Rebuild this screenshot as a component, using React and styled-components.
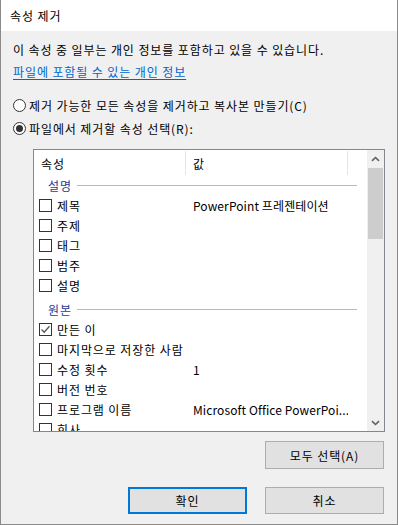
import React from "react";
import styled, { createGlobalStyle } from "styled-components";

const Global = createGlobalStyle`
  html, body { margin: 0; padding: 0; background: #f0f0f0; }
  * { box-sizing: border-box; }
`;

const Window = styled.div`
  width: 398px;
  height: 525px;
  display: flex;
  flex-direction: column;
  background: #f0f0f0;
  font-family: "Noto Sans CJK KR", "Noto Sans", sans-serif;
  font-size: 12px;
  letter-spacing: 0.9px;
  color: #000;
  border: 1px solid #8a8a8a;
  border-top: none;
  overflow: hidden;
`;

const TitleBar = styled.div`
  height: 31px;
  flex: none;
  background: #fff;
  display: flex;
  align-items: center;
  padding-left: 9px;
  font-size: 12px;
`;

const Body = styled.div`
  flex: 1;
  display: flex;
  flex-direction: column;
  padding: 0 12px 0 12px;
`;

const Line = styled.div`
  height: 16px;
  line-height: 16px;
  margin-top: ${(p) => p.$mt}px;
  white-space: nowrap;
`;

const Link = styled.a`
  color: #0066cc;
  text-decoration: underline;
  text-underline-offset: 2px;
  cursor: pointer;
`;

const RadioRow = styled.label`
  display: flex;
  align-items: center;
  height: 20px;
  margin-top: ${(p) => p.$mt}px;
  gap: 3px;
  white-space: nowrap;
`;

const RadioCircle = styled.span`
  width: 13px;
  height: 13px;
  border-radius: 50%;
  border: 1px solid #333;
  background: #fff;
  display: flex;
  align-items: center;
  justify-content: center;
  flex: none;
  &::after {
    content: "";
    display: ${(p) => (p.$on ? "block" : "none")};
    width: 7px;
    height: 7px;
    border-radius: 50%;
    background: #333;
  }
`;

const ListBox = styled.div`
  margin-top: 11px;
  margin-left: 20px;
  width: 352px;
  height: 283px;
  flex: none;
  border: 1px solid #828790;
  background: #fff;
  display: flex;
`;

const ListContent = styled.div`
  flex: 1;
  overflow: hidden;
  display: flex;
  flex-direction: column;
`;

const Header = styled.div`
  display: grid;
  grid-template-columns: 152px 162px 1fr;
  height: 25px;
  flex: none;
`;

const HeaderCell = styled.div`
  display: flex;
  align-items: center;
  padding-left: 7px;
  border-right: ${(p) => (p.$last ? "none" : "1px solid #e5e5e5")};
  margin: 1px 0 0 0;
`;

const GroupHeader = styled.div`
  display: flex;
  align-items: center;
  height: 20px;
  margin-top: ${(p) => (p.$first ? 0 : 4)}px;
  padding-left: 14px;
  padding-right: 10px;
  gap: 5px;
  color: #1e3c96;
  flex: none;
  &::after {
    content: "";
    flex: 1;
    height: 1px;
    background: #a6bce6;
  }
`;

const Row = styled.div`
  display: grid;
  grid-template-columns: 152px 162px;
  height: 20px;
  align-items: center;
  flex: none;
`;

const NameCell = styled.div`
  display: flex;
  align-items: center;
  gap: 5px;
  padding-left: 5px;
  white-space: nowrap;
`;

const ValueCell = styled.div`
  padding-left: 7px;
  white-space: nowrap;
  overflow: hidden;
  letter-spacing: 0.1px;
`;

const CheckBox = styled.span`
  width: 13px;
  height: 13px;
  border: 1px solid #333;
  background: #fff;
  flex: none;
  display: flex;
  align-items: center;
  justify-content: center;
`;

const ScrollBar = styled.div`
  width: 17px;
  flex: none;
  background: #f0f0f0;
  display: flex;
  flex-direction: column;
  align-items: center;
`;

const ArrowBtn = styled.div`
  height: 17px;
  width: 17px;
  flex: none;
  display: flex;
  align-items: center;
  justify-content: center;
`;

const Thumb = styled.div`
  width: 15px;
  height: 71px;
  margin-top: 1px;
  background: #cdcdcd;
  flex: none;
`;

const Spacer = styled.div`
  flex: 1;
`;

const ButtonRow = styled.div`
  display: flex;
  justify-content: flex-end;
  gap: 18px;
  margin-top: ${(p) => p.$mt}px;
  padding-right: 1px;
`;

const Button = styled.button`
  width: 119px;
  height: ${(p) => p.$h || 27}px;
  background: #e1e1e1;
  border: ${(p) => (p.$default ? "2px solid #0078d7" : "1px solid #adadad")};
  font-family: inherit;
  font-size: 12px;
  letter-spacing: 0.9px;
  color: #000;
  padding: 0;
  display: flex;
  align-items: center;
  justify-content: center;
`;

const Chevron = ({ down }) => (
  <svg width="9" height="6" viewBox="0 0 9 6">
    <path
      d={down ? "M1 1.2 L4.5 4.5 L8 1.2" : "M1 4.8 L4.5 1.5 L8 4.8"}
      fill="none"
      stroke="#606060"
      strokeWidth="1.6"
    />
  </svg>
);

const Check = () => (
  <svg width="11" height="11" viewBox="0 0 11 11">
    <path d="M1.5 5.5 L4.2 8.2 L9.5 2.2" fill="none" stroke="#555" strokeWidth="1.3" />
  </svg>
);

const groups = [
  {
    name: "설명",
    rows: [
      { n: "제목", v: "PowerPoint 프레젠테이션" },
      { n: "주제" },
      { n: "태그" },
      { n: "범주" },
      { n: "설명" },
    ],
  },
  {
    name: "원본",
    rows: [
      { n: "만든 이", c: true },
      { n: "마지막으로 저장한 사람" },
      { n: "수정 횟수", v: "1" },
      { n: "버전 번호" },
      { n: "프로그램 이름", v: "Microsoft Office PowerPoi..." },
      { n: "회사" },
    ],
  },
];

export default function App() {
  return (
    <>
      <Global />
      <Window>
        <TitleBar>속성 제거</TitleBar>
        <Body>
          <Line $mt={11}>이 속성 중 일부는 개인 정보를 포함하고 있을 수 있습니다.</Line>
          <Line $mt={6}>
            <Link>파일에 포함될 수 있는 개인 정보</Link>
          </Line>
          <RadioRow $mt={15}>
            <RadioCircle />
            제거 가능한 모든 속성을 제거하고 복사본 만들기(C)
          </RadioRow>
          <RadioRow $mt={3}>
            <RadioCircle $on />
            파일에서 제거할 속성 선택(R):
          </RadioRow>
          <ListBox>
            <ListContent>
              <Header>
                <HeaderCell>속성</HeaderCell>
                <HeaderCell>값</HeaderCell>
                <HeaderCell $last />
              </Header>
              {groups.map((g, gi) => (
                <React.Fragment key={g.name}>
                  <GroupHeader $first={gi === 0}>{g.name}</GroupHeader>
                  {g.rows.map((r) => (
                    <Row key={r.n}>
                      <NameCell>
                        <CheckBox>{r.c && <Check />}</CheckBox>
                        {r.n}
                      </NameCell>
                      <ValueCell>{r.v || ""}</ValueCell>
                    </Row>
                  ))}
                </React.Fragment>
              ))}
            </ListContent>
            <ScrollBar>
              <ArrowBtn>
                <Chevron />
              </ArrowBtn>
              <Thumb />
              <Spacer />
              <ArrowBtn>
                <Chevron down />
              </ArrowBtn>
            </ScrollBar>
          </ListBox>
          <ButtonRow $mt={9}>
            <Button $h={28}>모두 선택(A)</Button>
          </ButtonRow>
          <ButtonRow $mt={18}>
            <Button $default>확인</Button>
            <Button>취소</Button>
          </ButtonRow>
        </Body>
      </Window>
    </>
  );
}
